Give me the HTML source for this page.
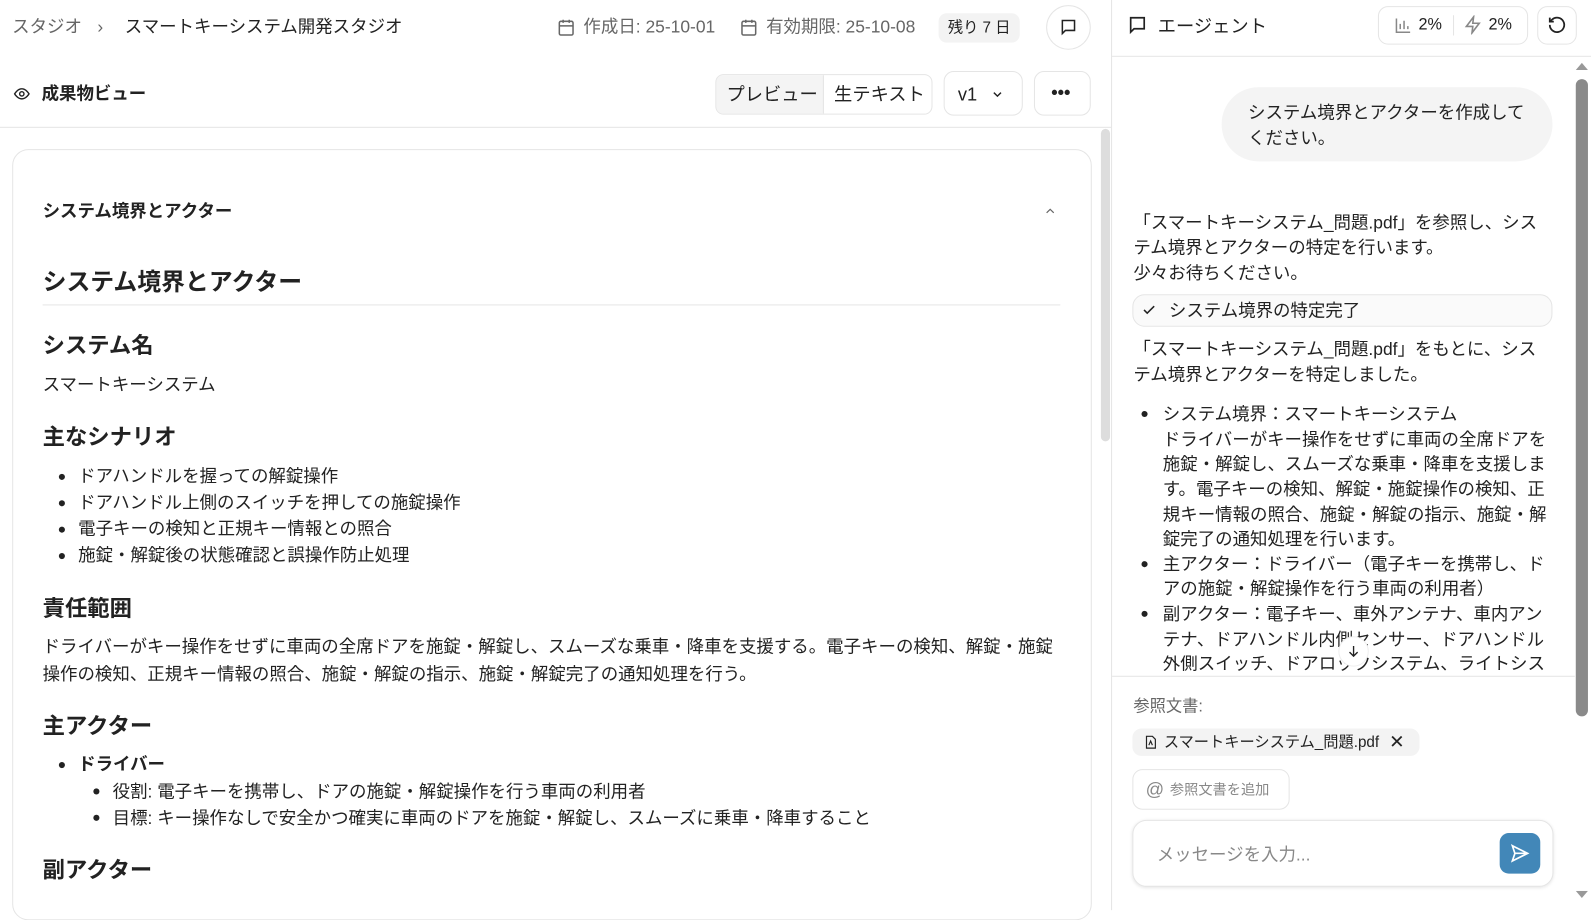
<!DOCTYPE html>
<html><head><meta charset="utf-8"><style>
*{box-sizing:border-box;margin:0;padding:0}
html,body{width:1591px;height:897px;overflow:hidden;background:#fff}
#w{position:absolute;left:0;top:0;width:1568px;height:884px;transform:scale(1.01467);transform-origin:0 0;font-family:"Liberation Sans","Noto Sans CJK JP",sans-serif;color:#222;font-size:17.2px}
.a{position:absolute;white-space:nowrap;line-height:1}
.g{color:#666}
.b{font-weight:bold}
.box{position:absolute;border:1px solid #e5e5e5;border-radius:10px;background:#fff}
svg{position:absolute}
.h2{font-size:22px;font-weight:bold}
.dot{position:absolute;width:6px;height:6px;border-radius:50%;background:#222}
</style></head><body><div id="w">
<div class="a g" style="left:12px;top:18px">スタジオ</div>
<div class="a g" style="left:96px;top:18px">›</div>
<div class="a" style="left:123px;top:18px">スマートキーシステム開発スタジオ</div>
<svg style="left:549px;top:18px" width="18" height="18" viewBox="0 0 24 24" fill="none" stroke="#666" stroke-width="2"><rect x="3" y="4" width="18" height="18" rx="2"/><path d="M16 2v4M8 2v4M3 10h18"/></svg>
<div class="a g" style="left:575px;top:18px">作成日: 25-10-01</div>
<svg style="left:729px;top:18px" width="18" height="18" viewBox="0 0 24 24" fill="none" stroke="#666" stroke-width="2"><rect x="3" y="4" width="18" height="18" rx="2"/><path d="M16 2v4M8 2v4M3 10h18"/></svg>
<div class="a g" style="left:755px;top:18px">有効期限: 25-10-08</div>
<div class="a" style="left:925px;top:13px;width:80px;height:29px;background:#f3f3f3;border-radius:8px;font-size:15px;line-height:29px;text-align:center">残り 7 日</div>
<div class="box" style="left:1031px;top:5px;width:44px;height:44px;border-radius:22px"></div>
<svg style="left:1044px;top:18px" width="18" height="18" viewBox="0 0 24 24" fill="none" stroke="#222" stroke-width="2"><path d="M4 3h16v13H8l-4 4z"/></svg>
<svg style="left:12px;top:84px" width="19" height="17" viewBox="0 0 24 24" fill="none" stroke="#222" stroke-width="2"><path d="M2 12s4-7 10-7 10 7 10 7-4 7-10 7S2 12 2 12z"/><circle cx="12" cy="12" r="3"/></svg>
<div class="a b" style="left:41px;top:84px">成果物ビュー</div>
<div class="box" style="left:705px;top:73px;width:214px;height:40px;overflow:hidden;border-radius:8px"><div style="position:absolute;left:0;top:0;width:106px;height:40px;background:#f4f4f4;border-right:1px solid #e5e5e5"></div></div>
<div class="a" style="left:716px;top:84px;font-size:18px">プレビュー</div>
<div class="a" style="left:822px;top:84px;font-size:18px">生テキスト</div>
<div class="box" style="left:930px;top:70px;width:78px;height:44px"></div>
<div class="a" style="left:944px;top:84px;font-size:18px">v1</div>
<svg style="left:976px;top:86px" width="14" height="14" viewBox="0 0 24 24" fill="none" stroke="#222" stroke-width="2.5"><path d="M6 9l6 6 6-6"/></svg>
<div class="box" style="left:1019px;top:70px;width:56px;height:44px"></div>
<div class="a b" style="left:1036px;top:82px;font-size:18px">•••</div>
<div style="position:absolute;left:0;top:125px;width:1095px;height:1px;background:#e5e5e5"></div>
<div style="position:absolute;left:1085px;top:127px;width:9px;height:308px;background:#ddd;border-radius:5px"></div>
<div class="box" style="left:12px;top:147px;width:1064px;height:760px;border-radius:16px"></div>
<div class="a b" style="left:42px;top:200px">システム境界とアクター</div>
<svg style="left:1027px;top:201px" width="16" height="14" viewBox="0 0 24 24" fill="none" stroke="#666" stroke-width="2"><path d="M6 15l6-6 6 6"/></svg>
<div class="a b" style="left:42px;top:267px;font-size:23.5px">システム境界とアクター</div>
<div style="position:absolute;left:42px;top:300px;width:1003px;height:1px;background:#e5e5e5"></div>
<div class="a h2" style="left:42px;top:330px">システム名</div>
<div class="a" style="left:42px;top:371px">スマートキーシステム</div>
<div class="a h2" style="left:42px;top:420px">主なシナリオ</div>
<div class="dot" style="left:58px;top:467px"></div><div class="a" style="left:77px;top:461px">ドアハンドルを握っての解錠操作</div>
<div class="dot" style="left:58px;top:493px"></div><div class="a" style="left:77px;top:487px">ドアハンドル上側のスイッチを押しての施錠操作</div>
<div class="dot" style="left:58px;top:519px"></div><div class="a" style="left:77px;top:513px">電子キーの検知と正規キー情報との照合</div>
<div class="dot" style="left:58px;top:545px"></div><div class="a" style="left:77px;top:539px">施錠・解錠後の状態確認と誤操作防止処理</div>
<div class="a h2" style="left:42px;top:589px">責任範囲</div>
<div class="a" style="left:42px;top:629px">ドライバーがキー操作をせずに車両の全席ドアを施錠・解錠し、スムーズな乗車・降車を支援する。電子キーの検知、解錠・施錠</div>
<div class="a" style="left:42px;top:656px">操作の検知、正規キー情報の照合、施錠・解錠の指示、施錠・解錠完了の通知処理を行う。</div>
<div class="a h2" style="left:42px;top:705px">主アクター</div>
<div class="dot" style="left:58px;top:751px"></div><div class="a b" style="left:77px;top:745px">ドライバー</div>
<div class="dot" style="left:92px;top:777px"></div><div class="a" style="left:111px;top:772px">役割: 電子キーを携帯し、ドアの施錠・解錠操作を行う車両の利用者</div>
<div class="dot" style="left:92px;top:803px"></div><div class="a" style="left:111px;top:798px">目標: キー操作なしで安全かつ確実に車両のドアを施錠・解錠し、スムーズに乗車・降車すること</div>
<div class="a h2" style="left:42px;top:847px">副アクター</div>
<div style="position:absolute;left:1095px;top:0;width:1px;height:897px;background:#e5e5e5"></div>
<svg style="left:1111px;top:15px" width="20" height="20" viewBox="0 0 24 24" fill="none" stroke="#222" stroke-width="2"><path d="M4 3h16v13H8l-4 4z"/></svg>
<div class="a" style="left:1141px;top:17px;font-size:18px">エージェント</div>
<div class="box" style="left:1358px;top:6px;width:148px;height:38px"></div>
<svg style="left:1374px;top:16px" width="18" height="18" viewBox="0 0 24 24" fill="none" stroke="#888" stroke-width="2"><path d="M3 3v18h18M8 17V10M13 17V6M18 17v-4"/></svg>
<div class="a" style="left:1398px;top:17px;font-size:16px">2%</div>
<div style="position:absolute;left:1432px;top:15px;width:1px;height:20px;background:#e5e5e5"></div>
<svg style="left:1442px;top:15px" width="19" height="19" viewBox="0 0 24 24" fill="none" stroke="#888" stroke-width="2"><path d="M13 2L4 14h8l-1 8 9-12h-8z"/></svg>
<div class="a" style="left:1467px;top:17px;font-size:16px">2%</div>
<div class="box" style="left:1515px;top:6px;width:39px;height:38px"></div>
<svg style="left:1525px;top:15px" width="19" height="19" viewBox="0 0 24 24" fill="none" stroke="#222" stroke-width="2.2"><path d="M3 12a9 9 0 1 0 3-6.7L3 8"/><path d="M3 3v5h5"/></svg>
<div style="position:absolute;left:1096px;top:55px;width:495px;height:1px;background:#e5e5e5"></div>
<svg style="left:1553px;top:61px" width="12" height="8"><path d="M0 8L6 1 12 8z" fill="#999"/></svg>
<div style="position:absolute;left:1553px;top:78px;width:12px;height:628px;background:#8a8a8a;border-radius:6px"></div>
<svg style="left:1553px;top:878px" width="12" height="8"><path d="M0 0L6 7 12 0z" fill="#999"/></svg>
<div style="position:absolute;left:1204px;top:86px;width:326px;height:73px;background:#f4f4f4;border-radius:36px"></div>
<div class="a" style="left:1230px;top:103px">システム境界とアクターを作成して</div>
<div class="a" style="left:1230px;top:128px">ください。</div>
<div class="a" style="left:1117px;top:211px">「スマートキーシステム_問題.pdf」を参照し、シス</div>
<div class="a" style="left:1117px;top:236px">テム境界とアクターの特定を行います。</div>
<div class="a" style="left:1117px;top:261px">少々お待ちください。</div>
<div class="box" style="left:1116px;top:290px;width:414px;height:32px;background:#fafafa;border-radius:12px"></div>
<svg style="left:1125px;top:298px" width="15" height="15" viewBox="0 0 24 24" fill="none" stroke="#222" stroke-width="2.5"><path d="M4 12l5 5L20 6"/></svg>
<div class="a" style="left:1152px;top:298px">システム境界の特定完了</div>
<div class="a" style="left:1117px;top:336px">「スマートキーシステム_問題.pdf」をもとに、シス</div>
<div class="a" style="left:1117px;top:361px">テム境界とアクターを特定しました。</div>
<div class="dot" style="left:1125px;top:405px"></div><div class="a" style="left:1146px;top:400px">システム境界：スマートキーシステム</div>
<div class="a" style="left:1146px;top:425px">ドライバーがキー操作をせずに車両の全席ドアを</div>
<div class="a" style="left:1146px;top:449px">施錠・解錠し、スムーズな乗車・降車を支援しま</div>
<div class="a" style="left:1146px;top:474px">す。電子キーの検知、解錠・施錠操作の検知、正</div>
<div class="a" style="left:1146px;top:499px">規キー情報の照合、施錠・解錠の指示、施錠・解</div>
<div class="a" style="left:1146px;top:523px">錠完了の通知処理を行います。</div>
<div class="dot" style="left:1125px;top:553px"></div><div class="a" style="left:1146px;top:548px">主アクター：ドライバー（電子キーを携帯し、ド</div>
<div class="a" style="left:1146px;top:572px">アの施錠・解錠操作を行う車両の利用者）</div>
<div class="dot" style="left:1125px;top:602px"></div><div class="a" style="left:1146px;top:597px">副アクター：電子キー、車外アンテナ、車内アン</div>
<div class="a" style="left:1146px;top:622px">テナ、ドアハンドル内側センサー、ドアハンドル</div>
<div class="a" style="left:1146px;top:646px;height:19px;overflow:hidden">外側スイッチ、ドアロックシステム、ライトシス</div>
<div style="position:absolute;left:1319px;top:627px;width:30px;height:30px;border-radius:15px;background:#fff;border:1px solid #eee"></div>
<svg style="left:1326px;top:633px" width="16" height="18" viewBox="0 0 24 24" fill="none" stroke="#222" stroke-width="2"><path d="M12 4v15M6 13l6 6 6-6"/></svg>
<div style="position:absolute;left:1096px;top:666px;width:456px;height:1px;background:#e5e5e5"></div>
<div class="a g" style="left:1117px;top:689px;font-size:16px">参照文書:</div>
<div style="position:absolute;left:1116px;top:718px;width:283px;height:27px;background:#f3f3f3;border-radius:9px"></div>
<svg style="left:1127px;top:724px" width="14" height="15" viewBox="0 0 24 24" fill="none" stroke="#222" stroke-width="2"><path d="M5 2h10l5 5v15H5z"/><path d="M9 17l3-7 3 7"/></svg>
<div class="a" style="left:1147px;top:724px;font-size:15px">スマートキーシステム_問題.pdf</div>
<div class="a" style="left:1369px;top:722px;font-size:18px">✕</div>
<div class="box" style="left:1116px;top:758px;width:155px;height:40px"></div>
<div class="a" style="left:1129px;top:769px;font-size:18px;color:#888">@</div>
<div class="a" style="left:1153px;top:771px;font-size:14px;color:#888">参照文書を追加</div>
<div class="box" style="left:1116px;top:808px;width:415px;height:66px;border-radius:14px;box-shadow:0 1px 3px rgba(0,0,0,.1)"></div>
<div class="a" style="left:1140px;top:834px;color:#888">メッセージを入力...</div>
<div style="position:absolute;left:1478px;top:821px;width:40px;height:40px;background:#4287b8;border-radius:9px"></div>
<svg style="left:1488px;top:831px" width="20" height="20" viewBox="0 0 24 24" fill="none" stroke="#fff" stroke-width="2"><path d="M3 3l18 9-18 9 3-9z"/><path d="M6 12h15"/></svg>
</div></body></html>
